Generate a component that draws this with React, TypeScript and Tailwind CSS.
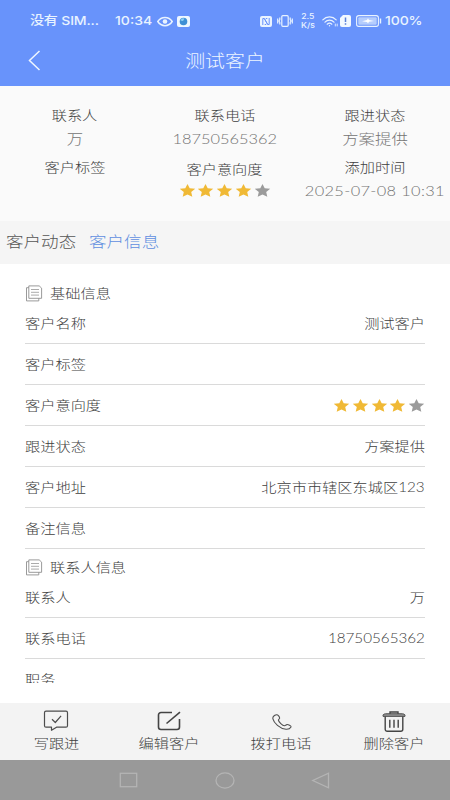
import React from "react";

type Align = "left" | "center" | "right";

const ORIGIN: Record<Align, string> = {
  left: "origin-left",
  center: "origin-center",
  right: "origin-right",
};

/* Text in the wide face of the app: glyphs are stretched horizontally. */
function Wide({
  children,
  align = "center",
  className = "text-[13px]",
}: {
  children: React.ReactNode;
  align?: Align;
  className?: string;
}) {
  return (
    <span className={`block w-max scale-x-[1.17] whitespace-nowrap leading-none ${ORIGIN[align]} ${className}`}>
      {children}
    </span>
  );
}

function Stars() {
  return (
    <div className="flex gap-[2.75px]">
      {[0, 1, 2, 3, 4].map((i) => (
        <svg key={i} width="16" height="13" viewBox="0 0 16 13" className={i < 4 ? "text-[#f0b935]" : "text-[#9b9b9b]"}>
          <path
            fill="currentColor"
            d="M7.500 0 9.700 4.300 15.200 4.800 11.200 8 12.300 12.800 7.500 10.500 2.700 12.800 3.800 8-.2 4.800 5.300 4.300Z"
          />
        </svg>
      ))}
    </div>
  );
}

function StatusBar() {
  return (
    <div className="flex h-[42px] items-center pl-[30px] text-[#e9f3ff]">
      <div className="w-[85px]">
        <Wide align="left" className="font-[Inter,'Noto_Sans_CJK_SC',sans-serif] text-[12px] font-medium tracking-[-0.15px]">没有 SIM...</Wide>
      </div>
      <div className="w-[42px]">
        <Wide align="left" className="font-[Inter] text-[12px] font-medium">10:34</Wide>
      </div>
      <svg width="16" height="11" viewBox="0 0 16 11" fill="none" stroke="currentColor" strokeWidth="1.5">
        <path d="M.8 5.5C4.300 0 11.700 0 15.200 5.500 11.700 11 4.300 11 .8 5.500Z" />
        <circle cx="8" cy="5.500" r="2.300" fill="currentColor" stroke="none" />
      </svg>
      <svg className="ml-[4px]" width="13" height="11" viewBox="0 0 13 11">
        <rect width="13" height="11" rx="2" fill="#eef7ff" />
        <circle cx="6.500" cy="5.500" r="3.800" fill="#3e8fd5" />
        <path d="M3.500 4.500a3 3 0 0 1 4-2L6 5Z" fill="#8fd0f4" />
      </svg>
      <svg className="ml-[70px]" width="12" height="11" viewBox="0 0 12 11">
        <rect width="12" height="11" rx="2" fill="#e9f3ff" />
        <path d="M2.800 9V2.500h1.500l3.400 6M9.200 2v6.500H7.700l-3.400-6M5.800 2.500h1.500M4.700 8.500h1.500" fill="none" stroke="#6892fb" strokeWidth="1" />
      </svg>
      <svg className="ml-[5px]" width="16" height="12" viewBox="0 0 16 12" fill="none" stroke="currentColor" strokeWidth="1.200">
        <rect x="4.800" y=".7" width="6.400" height="10.600" rx="1" />
        <path d="M2.800 2.500v2l-.8 1.500.8 1.500v2M.7 3.500v5M13.200 2.500v2l.8 1.500-.8 1.500v2M15.300 3.500v5" />
      </svg>
      <div className="ml-[6px] flex w-[17px] flex-col items-center font-[Inter] text-[7.500px] font-medium leading-[9px]">
        <span className="scale-x-115">2.5</span>
        <span className="scale-x-115">K/s</span>
      </div>
      <svg className="ml-[6px]" width="16" height="11" viewBox="0 0 16 11" fill="none" stroke="currentColor" strokeWidth="1.200" strokeLinecap="round">
        <path d="M.8 3.800C4.500 0 10.500 0 14.200 3.800M3 6.200C5.500 3.500 9.500 3.500 12 6.200M5.200 8.200C6.500 7 8.500 7 9.800 8.200" />
        <circle cx="7.500" cy="9.800" r=".7" fill="currentColor" stroke="none" />
        <path d="M13.300 8v2M15.200 8v2" strokeWidth=".9" />
      </svg>
      <svg className="ml-[2px]" width="11" height="12" viewBox="0 0 11 12">
        <path d="M3 0h6a2 2 0 0 1 2 2v8a2 2 0 0 1-2 2H2a2 2 0 0 1-2-2V3Z" fill="#f2f8ff" />
        <path d="M5.500 2.500v4.500M5.500 8.300v1.500" stroke="#5a7fd8" strokeWidth="1.500" />
      </svg>
      <svg className="ml-[5px]" width="26" height="12" viewBox="0 0 26 12">
        <rect x=".6" y=".6" width="21.800" height="10.800" rx="2.200" fill="none" stroke="currentColor" strokeWidth="1.100" />
        <rect x="2.300" y="2.300" width="18.400" height="7.400" rx="1" fill="#b5cdfd" />
        <path d="M6 6.200 11 5l1-1.800 1 1.800 5 1-5 .8-1 1.800-1-1.600Z" fill="#fff" />
        <path d="M24.500 3.500v5" stroke="currentColor" strokeWidth="1.400" />
      </svg>
      <div className="ml-[3px]">
        <Wide align="left" className="font-[Inter] text-[12px] font-medium tracking-[-0.1px]">100%</Wide>
      </div>
    </div>
  );
}

function DocIcon() {
  return (
    <svg width="18" height="17" viewBox="0 0 18 17" fill="none" stroke="#8e8e8e" strokeWidth=".9">
      <path d="M3.800.9h10.400l2.400 2.200v10.200H3.800Z" />
      <path d="M3.800 2.700H1.500v13.200h12.300v-2.600" />
      <path d="M6 4.500h8M6 7.300h8M6 10.100h8" stroke="#a2a2a2" />
    </svg>
  );
}

function SectionTitle({ children }: { children: React.ReactNode }) {
  return (
    <div className="flex h-[28px] items-center gap-[7px] pt-[9px]">
      <DocIcon />
      <Wide align="left">{children}</Wide>
    </div>
  );
}

function Row({ label, children }: { label: string; children?: React.ReactNode }) {
  return (
    <div className="flex h-[41px] shrink-0 items-center justify-between border-b border-[#dadada]">
      <Wide align="left">{label}</Wide>
      {typeof children === "string" ? <Wide align="right">{children}</Wide> : children}
    </div>
  );
}

function Action({ label, children }: { label: string; children: React.ReactNode }) {
  return (
    <div className="flex flex-1 flex-col items-center pt-[6px]">
      <div className="flex h-[24px] items-center justify-center">{children}</div>
      <Wide className="mt-[4px] text-[13px]">{label}</Wide>
    </div>
  );
}

export default function App() {
  return (
    <div className="flex h-[800px] w-[450px] flex-col overflow-hidden bg-white font-[Lato,'Noto_Sans_CJK_SC',sans-serif] font-light text-[#404040]">
      <header className="h-[86px] shrink-0 bg-[#6893fb]">
        <StatusBar />
        <div className="grid h-[37px] grid-cols-[1fr_auto_1fr] items-center text-[#eef6ff]">
          <svg className="ml-[28px]" width="13" height="21" viewBox="0 0 13 21" fill="none" stroke="currentColor" strokeWidth="1.500">
            <path d="M11.500 1 1.500 10.500l10 9.500" />
          </svg>
          <Wide className="text-[17px]">测试客户</Wide>
          <span />
        </div>
      </header>

      <section className="grid h-[135px] shrink-0 grid-cols-3 bg-[#fafafa] pt-[23px] text-center">
        <div className="flex flex-col items-center">
          <Wide>联系人</Wide>
          <Wide className="mt-[10px] text-[14px] text-[#737373]">万</Wide>
          <Wide className="mt-[15px] text-[13px]">客户标签</Wide>
        </div>
        <div className="flex flex-col items-center">
          <Wide>联系电话</Wide>
          <Wide className="mt-[10px] text-[14px] text-[#737373]">18750565362</Wide>
          <Wide className="mt-[17px] mb-[8px] text-[13px]">客户意向度</Wide>
          <Stars />
        </div>
        <div className="flex flex-col items-center">
          <Wide>跟进状态</Wide>
          <Wide className="mt-[10px] text-[14px] text-[#737373]">方案提供</Wide>
          <Wide className="mt-[15px] text-[13px]">添加时间</Wide>
          <Wide className="mt-[10px] text-[14px] tracking-[0.3px] text-[#737373]">2025-07-08 10:31</Wide>
        </div>
      </section>

      <nav className="flex h-[43px] shrink-0 items-center gap-[23px] bg-[#f5f5f5] pb-[2px] pl-[6px]">
        <Wide align="left" className="text-[15px] text-[#555]">客户动态</Wide>
        <Wide align="left" className="text-[15px] text-[#5f8fe0]">客户信息</Wide>
      </nav>

      <main className="mb-[20px] h-[419px] shrink-0 overflow-hidden px-[25px] pt-[11px]">
        <SectionTitle>基础信息</SectionTitle>
        <Row label="客户名称">测试客户</Row>
        <Row label="客户标签" />
        <Row label="客户意向度"><Stars /></Row>
        <Row label="跟进状态">方案提供</Row>
        <Row label="客户地址">北京市市辖区东城区123</Row>
        <Row label="备注信息" />
        <SectionTitle>联系人信息</SectionTitle>
        <Row label="联系人">万</Row>
        <Row label="联系电话">18750565362</Row>
        <Row label="职务" />
      </main>

      <footer className="flex h-[57px] shrink-0 bg-[#f3f3f3]">
        <Action label="写跟进">
          <svg width="26" height="22" viewBox="0 0 26 22" fill="none" stroke="#4c4c4c" strokeWidth="1.200" strokeLinejoin="round">
            <path d="M3 1.200h20a1.500 1.500 0 0 1 1.500 1.500v13a1.500 1.500 0 0 1-1.500 1.500H13.500L8.500 20.300v-3.100H3a1.500 1.500 0 0 1-1.500-1.500v-13A1.500 1.500 0 0 1 3 1.200Z" />
            <path d="m9 9.300 3.300 3.200 5.800-6.700" />
          </svg>
        </Action>
        <Action label="编辑客户">
          <svg width="24" height="20" viewBox="0 0 24 20" fill="none" stroke="#444" strokeWidth="1.600">
            <path d="M15 1.500H4A2.500 2.500 0 0 0 1.500 4v12A2.500 2.500 0 0 0 4 18.500h16a2.500 2.500 0 0 0 2.500-2.500V8" />
            <path d="M9.500 12.500 23 1.200" />
          </svg>
        </Action>
        <Action label="拨打电话">
          <svg width="20" height="16" viewBox="0 0 20 16" fill="none" stroke="#505050" strokeWidth="1.100" strokeLinejoin="round" className="ml-[2px] mt-[2px]">
            <path d="M4.500.8C2.500 1.300.6 3 .9 4.800 2 9 7.500 14.500 14 15.200c2.200.2 4.300-1 5-2.200.4-1.300-3-2.700-4.200-2.400-.9.2-1.300 1.300-2.300 1.200C10.500 11.500 6.700 8 6.400 6.200c-.1-1 1.100-1.200 1.200-2C7.700 3 5.900.5 4.500.8Z" />
          </svg>
        </Action>
        <Action label="删除客户">
          <svg width="24" height="21" viewBox="0 0 24 21" fill="none" stroke="#444" strokeWidth="1.400">
            <path d="M1 4.500C1 3 3 2.800 5 2.800h14c2 0 4 .2 4 1.700v.8H1Z" fill="#999" strokeWidth="1" />
            <path d="M8 2.800V1h8v1.800M3.200 5.500v12.800a2 2 0 0 0 2 2h13.600a2 2 0 0 0 2-2V5.500" />
            <path d="M7.800 8.800v8M12 8.800v8M16.200 8.800v8" />
          </svg>
        </Action>
      </footer>

      <div className="flex h-[40px] shrink-0 items-center bg-[#999]">
        <svg className="ml-[119px]" width="19" height="16" viewBox="0 0 19 16" fill="none" stroke="#b4b4b4" strokeWidth="1.300">
          <rect x="1.300" y="1.300" width="16.400" height="13.400" />
        </svg>
        <svg className="ml-[77px]" width="20" height="17" viewBox="0 0 20 17" fill="none" stroke="#b4b4b4" strokeWidth="1.300">
          <ellipse cx="10" cy="8.500" rx="9" ry="7.600" />
        </svg>
        <svg className="ml-[76px]" width="19" height="17" viewBox="0 0 19 17" fill="none" stroke="#b4b4b4" strokeWidth="1.300">
          <path d="M17.500 1.200v14.600L1.800 8.500Z" />
        </svg>
      </div>
    </div>
  );
}
